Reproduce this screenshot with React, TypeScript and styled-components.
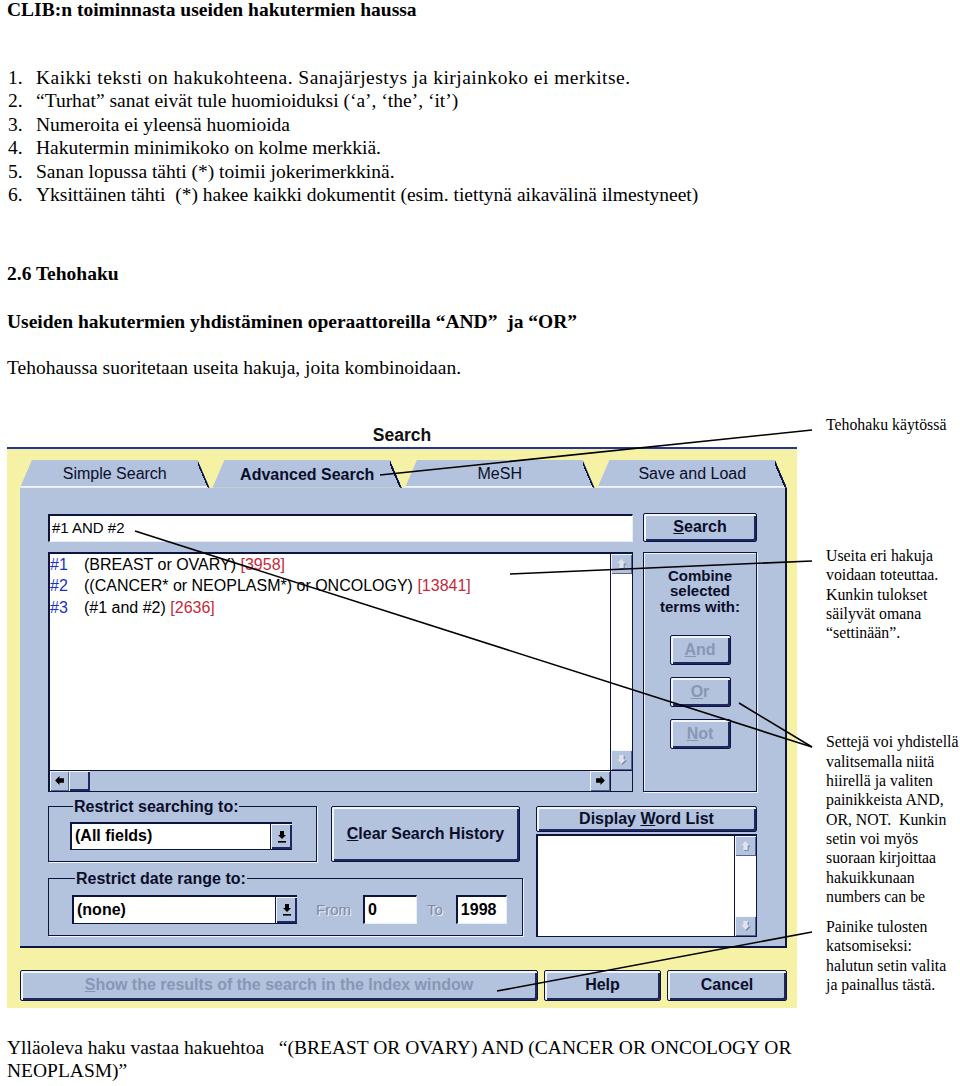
import React from 'react';
import styled, { createGlobalStyle } from 'styled-components';

const navy = '#0e1440';
const face = '#b3c2dd';
const hilite = '#f2f5fb';
const shade = '#1e2760';
const dimText = '#8896b6';
const ui = '"Liberation Sans", Arial, sans-serif';

const GlobalStyle = createGlobalStyle`
  html, body { margin: 0; padding: 0; background: #ffffff; }
  body { font-family: "Liberation Serif", "Times New Roman", serif; color: #000; }
`;

const Page = styled.div`
  position: relative;
  width: 960px;
  min-height: 1086px;
  overflow: hidden;
`;

const Title = styled.h1`
  margin: 0;
  padding-left: 7px;
  font-size: 19.5px;
  line-height: 20px;
  font-weight: bold;
`;

const Rules = styled.ol`
  list-style: none;
  margin: 46px 0 0;
  padding: 0 0 0 8px;
  font-size: 19.5px;
  line-height: 23.4px;
`;

const Rule = styled.li<{ $spread?: number }>`
  display: flex;
  white-space: nowrap;
  letter-spacing: ${p => p.$spread ?? 0}px;
`;

const RuleNo = styled.span`
  width: 28px;
  flex: none;
  letter-spacing: 0;
`;

const Heading = styled.h2<{ $gap: number }>`
  margin: ${p => p.$gap}px 0 0;
  padding-left: 7px;
  font-size: 19.5px;
  line-height: 23.4px;
  font-weight: bold;
`;

const Para = styled.p<{ $gap: number; $lh?: number }>`
  margin: ${p => p.$gap}px 0 0;
  padding-left: 7px;
  width: 830px;
  font-size: 19.5px;
  line-height: ${p => p.$lh ?? 23.4}px;
`;

const Section = styled.div`
  margin-top: 35px;
  display: flex;
  align-items: flex-start;
`;

const Window = styled.div`
  margin-left: 7px;
  width: 790px;
  flex: none;
`;

const WinTitle = styled.div`
  margin-top: 10px;
  height: 20px;
  line-height: 20px;
  text-align: center;
  font: bold 17.5px ${ui};
  color: #111;
`;

const Frame = styled.div`
  margin-top: 2px;
  border-top: 2px solid #25339c;
  background: #f5f2a6;
  padding: 11px 10px 7px 13px;
`;

const Tabs = styled.div`
  display: flex;
  gap: 3px;
  height: 28px;
`;

const Tab = styled.div<{ $active?: boolean }>`
  position: relative;
  flex: 1;
  box-sizing: border-box;
  height: 28px;
  padding-top: ${p => (p.$active ? 2 : 3)}px;
  background: ${face};
  clip-path: polygon(12px 0, calc(100% - 12px) 0, 100% 100%, 0 100%);
  border-bottom: ${p => (p.$active ? 'none' : `2px solid ${hilite}`)};
  display: flex;
  align-items: center;
  justify-content: center;
  font: ${p => (p.$active ? 'bold' : 'normal')} 16px ${ui};
  color: #0a0e2a;
  &::after {
    content: '';
    position: absolute;
    top: 0;
    right: 0;
    width: 12px;
    height: 28px;
    background: linear-gradient(
      to bottom left,
      transparent 50%,
      ${navy} 50%,
      ${navy} calc(50% + 2px),
      transparent calc(50% + 2px)
    );
  }
`;

const Panel = styled.div`
  background: ${face};
  border-right: 2px solid ${navy};
  border-bottom: 2px solid ${navy};
  padding: 25px 28px 9px 28px;
`;

const Row = styled.div<{ $gap: number; $space: number }>`
  margin-top: ${p => p.$space}px;
  display: flex;
  align-items: flex-start;
  gap: ${p => p.$gap}px;
`;

const Button = styled.button<{ $dim?: boolean }>`
  box-sizing: border-box;
  margin: 0;
  padding: 0;
  flex: none;
  background: ${face};
  border: 1px solid ${navy};
  border-radius: 2px;
  box-shadow: inset 2px 2px 0 ${hilite}, inset -2px -2px 0 ${shade};
  text-align: center;
  font: bold 16px ${ui};
  color: ${p => (p.$dim ? dimText : '#0a0e2a')};
  cursor: default;
  white-space: nowrap;
`;

const SearchButton = styled(Button)`
  width: 114px;
  height: 29px;
`;

const OpButton = styled(Button)`
  width: 61px;
  height: 30px;
`;

const ClearButton = styled(Button)`
  width: 189px;
  height: 56px;
  margin-top: 7px;
`;

const WordButton = styled(Button)`
  width: 100%;
  height: 26px;
  margin-top: 7px;
`;

const FooterButton = styled(Button)<{ $w?: number }>`
  height: 31px;
  width: ${p => (p.$w ? `${p.$w}px` : 'auto')};
  flex: ${p => (p.$w ? 'none' : '1')};
`;

const QueryInput = styled.div`
  box-sizing: border-box;
  width: 585px;
  height: 28px;
  margin-top: 1px;
  flex: none;
  background: #fff;
  border-top: 2px solid ${navy};
  border-left: 2px solid ${navy};
  border-right: 1px solid #e8edf6;
  border-bottom: 1px solid #e8edf6;
  padding: 2px 0 0 2px;
  font: 15px ${ui};
  line-height: 20px;
  color: #000;
`;

const ListBox = styled.div`
  box-sizing: border-box;
  width: 585px;
  height: 240px;
  flex: none;
  display: grid;
  grid-template-columns: 1fr 22px;
  grid-template-rows: 1fr 21px;
  background: #fff;
  border: 1px solid ${navy};
  border-top-width: 2px;
  border-left-width: 2px;
`;

const History = styled.div`
  overflow: hidden;
`;

const Entry = styled.div`
  display: flex;
  font: 16px ${ui};
  line-height: 21.5px;
  white-space: nowrap;
  color: #000;
`;

const EntryNo = styled.span`
  width: 34px;
  flex: none;
  color: #1a32c4;
`;

const Hits = styled.span`
  color: #c42a3a;
`;

const VScroll = styled.div`
  display: flex;
  flex-direction: column;
  border-left: 1px solid ${navy};
  background: #fff;
`;

const HScroll = styled.div`
  display: flex;
  background: ${face};
  border-top: 1px solid ${navy};
`;

const Corner = styled.div`
  background: ${face};
  border-top: 1px solid ${navy};
  border-left: 1px solid ${navy};
`;

const ScrollBtn = styled.div<{ $w?: number; $h?: number }>`
  flex: none;
  width: ${p => (p.$w ? `${p.$w}px` : 'auto')};
  height: ${p => (p.$h ? `${p.$h}px` : 'auto')};
  display: flex;
  align-items: center;
  justify-content: center;
  background: ${face};
  box-shadow: inset 1px 1px 0 ${hilite}, inset -1px -1px 0 #56638c;
`;

const Thumb = styled.div`
  width: 21px;
  flex: none;
  background: ${face};
  box-shadow: inset 1px 1px 0 ${hilite}, inset -2px -2px 0 ${shade};
`;

const Track = styled.div`
  flex: 1;
`;

const CombineBox = styled.div`
  box-sizing: border-box;
  width: 114px;
  height: 240px;
  flex: none;
  border: 1px solid ${navy};
  box-shadow: inset 1px 1px 0 ${hilite}, 1px 1px 0 ${hilite};
  display: flex;
  flex-direction: column;
  align-items: center;
  padding-top: 15px;
`;

const CombineLabel = styled.div`
  font: bold 15px ${ui};
  line-height: 15.5px;
  text-align: center;
  color: #0a0e2a;
`;

const OpStack = styled.div`
  margin-top: 21px;
  display: flex;
  flex-direction: column;
  gap: 12px;
`;

const LeftCol = styled.div`
  width: 475px;
  flex: none;
`;

const RightCol = styled.div`
  width: 221px;
  flex: none;
  display: flex;
  flex-direction: column;
`;

const TopLine = styled.div`
  display: flex;
  align-items: flex-start;
  gap: 14px;
`;

const Group = styled.fieldset<{ $w: number; $space?: number; $pad: string }>`
  box-sizing: border-box;
  width: ${p => p.$w}px;
  min-width: 0;
  margin: ${p => p.$space ?? 0}px 0 0;
  padding: ${p => p.$pad};
  border: 1px solid ${navy};
  box-shadow: 1px 1px 0 ${hilite};
`;

const Legend = styled.legend`
  padding: 0 1px;
  margin-left: 3px;
  font: bold 16px ${ui};
  line-height: 16px;
  color: #0a0e2a;
`;

const Select = styled.div<{ $w: number; $h: number }>`
  box-sizing: border-box;
  width: ${p => p.$w}px;
  height: ${p => p.$h}px;
  flex: none;
  display: flex;
  background: #fff;
  border-top: 2px solid ${navy};
  border-left: 2px solid ${navy};
  border-bottom: 1px solid ${navy};
`;

const SelectValue = styled.span`
  flex: 1;
  padding-left: 3px;
  display: flex;
  align-items: center;
  font: bold 16px ${ui};
  color: #000;
`;

const DropBtn = styled.span`
  width: 21px;
  flex: none;
  display: flex;
  align-items: center;
  justify-content: center;
  background: ${face};
  border-left: 1px solid ${navy};
  box-shadow: inset 1px 1px 0 ${hilite}, inset -2px -2px 0 ${shade};
`;

const DateRow = styled.div`
  display: flex;
  align-items: center;
`;

const DimLabel = styled.span<{ $space: number }>`
  margin-left: ${p => p.$space}px;
  font: 15px ${ui};
  color: #7f8aa6;
  text-shadow: 1px 1px 0 #eef1f8;
`;

const NumField = styled.div<{ $w: number; $space: number }>`
  box-sizing: border-box;
  width: ${p => p.$w}px;
  height: 29px;
  margin-left: ${p => p.$space}px;
  background: #fff;
  border-top: 2px solid ${navy};
  border-left: 2px solid ${navy};
  border-right: 1px solid #e8edf6;
  border-bottom: 1px solid #e8edf6;
  padding-left: 3px;
  display: flex;
  align-items: center;
  font: bold 16px ${ui};
  color: #000;
`;

const WordList = styled.div`
  box-sizing: border-box;
  margin-top: 2px;
  height: 103px;
  display: grid;
  grid-template-columns: 1fr 22px;
  background: #fff;
  border: 1px solid ${navy};
  border-top-width: 2px;
  border-left-width: 2px;
`;

const Footer = styled.div`
  margin-top: 22px;
  display: flex;
  gap: 6px;
`;

const Notes = styled.div`
  margin-left: 29px;
  font-size: 15.8px;
  line-height: 19.3px;
  white-space: nowrap;
`;

const Note = styled.div<{ $gap: number }>`
  margin-top: ${p => p.$gap}px;
`;

const Callouts = styled.svg`
  position: absolute;
  top: 0;
  left: 0;
  pointer-events: none;
`;

type Dir = 'up' | 'down' | 'left' | 'right';

const arrowPoints: Record<Dir, string> = {
  up: '5,1 9,5 7,5 7,9 3,9 3,5 1,5',
  down: '5,9 9,5 7,5 7,1 3,1 3,5 1,5',
  left: '1,5 5,1 5,3 9,3 9,7 5,7 5,9',
  right: '9,5 5,1 5,3 1,3 1,7 5,7 5,9',
};

const Arrow = ({ dir, dim }: { dir: Dir; dim?: boolean }) => (
  <svg width="11" height="11" viewBox="0 0 10 10">
    {dim && <polygon points={arrowPoints[dir]} fill="#6a7898" transform="translate(0.8,0.8)" />}
    <polygon points={arrowPoints[dir]} fill={dim ? '#dfe4ee' : '#000'} />
  </svg>
);

const DropArrow = () => (
  <svg width="10" height="13" viewBox="0 0 10 13">
    <polygon points="5,9 9,5 7,5 7,1 3,1 3,5 1,5" fill="#000" />
    <rect x="1" y="11" width="8" height="1.6" fill="#000" />
  </svg>
);

const VerticalBar = () => (
  <VScroll>
    <ScrollBtn $h={20}><Arrow dir="up" dim /></ScrollBtn>
    <Track />
    <ScrollBtn $h={20}><Arrow dir="down" dim /></ScrollBtn>
  </VScroll>
);

const history = [
  { no: '#1', q: '(BREAST or OVARY)', hits: '[3958]' },
  { no: '#2', q: '((CANCER* or NEOPLASM*) or ONCOLOGY)', hits: '[13841]' },
  { no: '#3', q: '(#1 and #2)', hits: '[2636]' },
];

const rules = [
  'Kaikki teksti on hakukohteena. Sanajärjestys ja kirjainkoko ei merkitse.',
  '\u201CTurhat\u201D sanat eivät tule huomioiduksi (\u2018a\u2019, \u2018the\u2019, \u2018it\u2019)',
  'Numeroita ei yleensä huomioida',
  'Hakutermin minimikoko on kolme merkkiä.',
  'Sanan lopussa tähti (*) toimii jokerimerkkinä.',
  'Yksittäinen tähti\u00A0 (*) hakee kaikki dokumentit (esim. tiettynä aikavälinä ilmestyneet)',
];

const summary =
  'Ylläoleva haku vastaa hakuehtoa\u00A0\u00A0 \u201C(BREAST OR OVARY) AND (CANCER OR ONCOLOGY OR NEOPLASM)\u201D';

export default function App() {
  return (
    <Page>
      <GlobalStyle />
      <Title>CLIB:n toiminnasta useiden hakutermien haussa</Title>

      <Rules>
        {rules.map((r, i) => (
          <Rule key={i} $spread={i === 0 ? 0.48 : 0}>
            <RuleNo>{i + 1}.</RuleNo>
            {r}
          </Rule>
        ))}
      </Rules>

      <Heading $gap={56}>2.6 Tehohaku</Heading>
      <Heading $gap={24}>
        {'Useiden hakutermien yhdistäminen operaattoreilla \u201CAND\u201D\u00A0 ja \u201COR\u201D'}
      </Heading>
      <Para $gap={23}>Tehohaussa suoritetaan useita hakuja, joita kombinoidaan.</Para>

      <Section>
        <Window>
          <WinTitle>Search</WinTitle>
          <Frame>
            <Tabs>
              <Tab>Simple Search</Tab>
              <Tab $active>Advanced Search</Tab>
              <Tab>MeSH</Tab>
              <Tab>Save and Load</Tab>
            </Tabs>
            <Panel>
              <Row $gap={10} $space={0}>
                <QueryInput>#1 AND #2</QueryInput>
                <SearchButton><u>S</u>earch</SearchButton>
              </Row>

              <Row $gap={10} $space={10}>
                <ListBox>
                  <History>
                    {history.map(h => (
                      <Entry key={h.no}>
                        <EntryNo>{h.no}</EntryNo>
                        {h.q}&nbsp;<Hits>{h.hits}</Hits>
                      </Entry>
                    ))}
                  </History>
                  <VerticalBar />
                  <HScroll>
                    <ScrollBtn $w={19}><Arrow dir="left" /></ScrollBtn>
                    <Thumb />
                    <Track />
                    <ScrollBtn $w={20}><Arrow dir="right" /></ScrollBtn>
                  </HScroll>
                  <Corner />
                </ListBox>
                <CombineBox>
                  <CombineLabel>
                    Combine<br />selected<br />terms with:
                  </CombineLabel>
                  <OpStack>
                    <OpButton $dim><u>A</u>nd</OpButton>
                    <OpButton $dim><u>O</u>r</OpButton>
                    <OpButton $dim><u>N</u>ot</OpButton>
                  </OpStack>
                </CombineBox>
              </Row>

              <Row $gap={13} $space={7}>
                <LeftCol>
                  <TopLine>
                    <Group $w={269} $pad="7px 0 11px 21px">
                      <Legend>Restrict searching to:</Legend>
                      <Select $w={222} $h={28}>
                        <SelectValue>(All fields)</SelectValue>
                        <DropBtn><DropArrow /></DropBtn>
                      </Select>
                    </Group>
                    <ClearButton><u>C</u>lear Search History</ClearButton>
                  </TopLine>
                  <Group $w={475} $space={9} $pad="8px 0 11px 23px">
                    <Legend>Restrict date range to:</Legend>
                    <DateRow>
                      <Select $w={225} $h={29}>
                        <SelectValue>(none)</SelectValue>
                        <DropBtn><DropArrow /></DropBtn>
                      </Select>
                      <DimLabel $space={19}>From</DimLabel>
                      <NumField $w={54} $space={12}>0</NumField>
                      <DimLabel $space={10}>To</DimLabel>
                      <NumField $w={51} $space={13}>1998</NumField>
                    </DateRow>
                  </Group>
                </LeftCol>
                <RightCol>
                  <WordButton>Display <u>W</u>ord List</WordButton>
                  <WordList>
                    <div />
                    <VerticalBar />
                  </WordList>
                </RightCol>
              </Row>
            </Panel>

            <Footer>
              <FooterButton $w={518} $dim>
                <u>S</u>how the results of the search in the Index window
              </FooterButton>
              <FooterButton $w={117}>Help</FooterButton>
              <FooterButton>Cancel</FooterButton>
            </Footer>
          </Frame>
        </Window>

        <Notes>
          <Note $gap={0}>Tehohaku käytössä</Note>
          <Note $gap={112}>
            Useita eri hakuja<br />
            voidaan toteuttaa.<br />
            Kunkin tulokset<br />
            säilyvät omana<br />
            {'\u201Csettinään\u201D.'}
          </Note>
          <Note $gap={90}>
            Settejä voi yhdistellä<br />
            valitsemalla niitä<br />
            hiirellä ja valiten<br />
            painikkeista AND,<br />
            OR, NOT.&nbsp; Kunkin<br />
            setin voi myös<br />
            suoraan kirjoittaa<br />
            hakuikkunaan<br />
            numbers can be
          </Note>
          <Note $gap={11}>
            Painike tulosten<br />
            katsomiseksi:<br />
            halutun setin valita<br />
            ja painallus tästä.
          </Note>
        </Notes>
      </Section>

      <Para $gap={28} $lh={23.4}>{summary}</Para>

      <Callouts width="960" height="1086" viewBox="0 0 960 1086">
        <g stroke="#000" strokeWidth="1.6" fill="none">
          <line x1="380" y1="475" x2="812" y2="430" />
          <line x1="510" y1="574" x2="812" y2="561" />
          <line x1="135" y1="531" x2="812" y2="747" />
          <line x1="739" y1="703" x2="812" y2="747" />
          <line x1="497" y1="991" x2="812" y2="932" />
        </g>
      </Callouts>
    </Page>
  );
}
